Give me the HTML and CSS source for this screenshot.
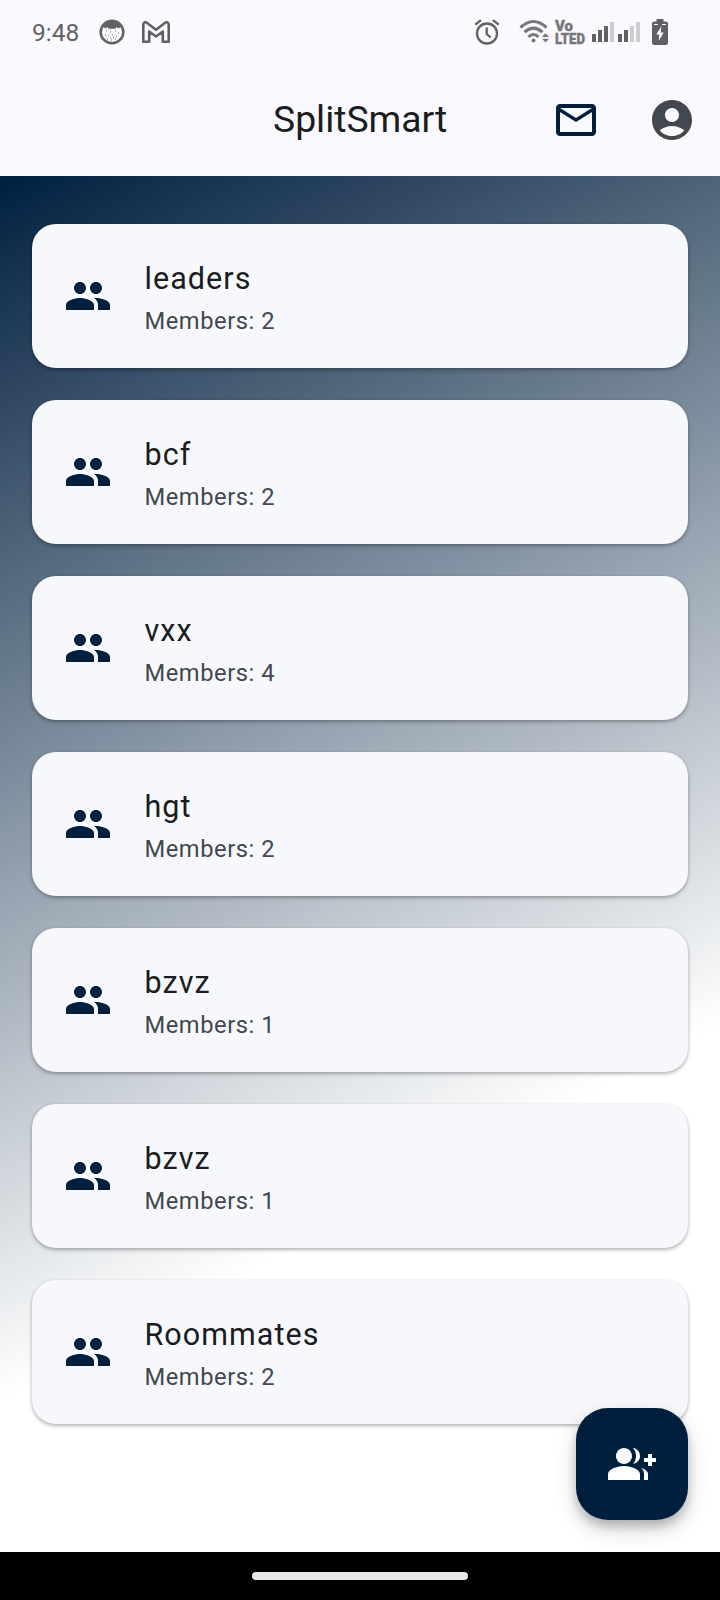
FILE: index.html
```html
<!DOCTYPE html>
<html lang="en">
<head>
<meta charset="utf-8">
<title>SplitSmart</title>
<link rel="stylesheet" href="styles.css">
</head>
<body>
<svg class="sprite" aria-hidden="true">
  <symbol id="people" viewBox="0 0 24 24"><path d="M16 11c1.66 0 2.99-1.34 2.99-3S17.66 5 16 5s-3 1.34-3 3 1.34 3 3 3zm-8 0c1.66 0 2.99-1.34 2.99-3S9.66 5 8 5 5 6.340 5 8s1.34 3 3 3zm0 2c-2.330 0-7 1.170-7 3.500V19h14v-2.500c0-2.330-4.670-3.500-7-3.500zm8 0c-.290 0-.620.020-.970.050 1.160.840 1.970 1.970 1.970 3.450V19h6v-2.500c0-2.330-4.670-3.500-7-3.500z"/></symbol>
</svg>
<div class="screen">
  <header class="top">
    <div class="status">
      <span class="clock">9:48</span>
      <svg class="st-cat" width="26" height="26" viewBox="0 0 26 26"><circle cx="13" cy="13" r="11.300" fill="none" stroke="#616165" stroke-width="2.500"/><path d="M4 8Q8 2 13 2t9 6L19 9.500 17.500 7.700 16.500 9.700H9.500L8.500 7.700 7 9.500z" fill="#616165"/><path d="M7 12h1M11 13h1M16 12h1M19 14h1M6 16h1M9 17h1M13 16h1M17 17h1M8 20h1M12 21h1M16 20h1M14 18.500h1M11 19h1" stroke="#616165" stroke-width="1"/></svg>
      <svg class="st-gmail" width="28" height="22" viewBox="0 0 28 22"><path d="M1.300 3.500C1.300 1.300 3.300.700 4.800 1.800L14 8.800l9.200-7c1.500-1.100 3.500-.500 3.500 1.700V20.700H20.800V10.500L14 15.500 7.200 10.500V20.700H1.300z" fill="none" stroke="#616165" stroke-width="2.600" stroke-linejoin="round"/></svg>
      <span class="spacer"></span>
      <svg class="st-alarm" width="26" height="26" viewBox="0 0 26 26" fill="none" stroke="#616165" stroke-width="2.300"><circle cx="13" cy="14.500" r="10"/><path d="M1.300 5.700 7 1.200M19 1.200l5.700 4.500M12.700 8.500v6.500l4 3.500"/></svg>
      <svg class="st-wifi" width="32" height="26" viewBox="0 0 32 26" fill="none" stroke="#77777b" stroke-width="3.100"><path d="M1.500 8.500Q14.500-3.500 27.500 8.500M5.500 13.200Q14.500 5 23.500 13.200M9.500 17.800Q14.500 13.200 19.500 17.800"/><circle cx="14.500" cy="21.500" r="2" fill="#77777b" stroke="none"/><path d="m23 18 3.500-3.700 3.500 3.700zM23 19.700l3.500 3.700 3.500-3.700z" fill="#77777b" stroke="none"/></svg>
      <svg class="st-volte" width="30" height="26" viewBox="0 0 30 26"><text x="0" y="11.500" textLength="18" lengthAdjust="spacingAndGlyphs">Vo</text><text x="0" y="25" textLength="30" lengthAdjust="spacingAndGlyphs">LTED</text></svg>
      <svg class="st-signal" width="48" height="20" viewBox="0 0 48 20"><path d="M0 12h4v8H0zM6 8h4v12H6zM12 4h4v16h-4zM26 12h4v8h-4zM32 8h4v12h-4z" fill="#616165"/><path d="M18 0h4v20h-4zM38 4h4v16h-4zM44 0h4v20h-4z" fill="#cdcdd1"/></svg>
      <svg class="st-battery" width="16" height="26" viewBox="0 0 16 26"><path d="M4.500 0h7v2.500H14q2 0 2 2V24q0 2-2 2H2q-2 0-2-2V4.500q0-2 2-2h2.500z" fill="#616165"/><path d="M2 5.500h4M10 5.500h4" stroke="#f9f9ff" stroke-width="1"/><path d="M9.500 7 4.300 15.500h3L6.700 22l5-8.500h-3z" fill="#f9f9ff"/></svg>
    </div>
    <div class="appbar">
      <h1>SplitSmart</h1>
      <svg class="mail" viewBox="0 0 24 24"><path d="M22 6c0-1.100-.9-2-2-2H4c-1.100 0-2 .9-2 2v12c0 1.100.9 2 2 2h16c1.100 0 2-.9 2-2V6zm-2 0-8 5-8-5h16zm0 12H4V8l8 5 8-5v10z"/></svg>
      <svg class="account" viewBox="0 0 24 24"><path d="M12 2C6.480 2 2 6.480 2 12s4.480 10 10 10 10-4.480 10-10S17.520 2 12 2zm0 4c1.930 0 3.500 1.570 3.500 3.500S13.930 13 12 13s-3.500-1.570-3.500-3.500S10.070 6 12 6zm0 14c-2.030 0-4.430-.820-6.140-2.880C7.550 15.800 9.680 15 12 15s4.450.800 6.140 2.120C16.430 19.180 14.030 20 12 20z"/></svg>
    </div>
  </header>
  <main class="groups">
    <article class="card"><svg><use href="#people"/></svg><div><h2>leaders</h2><p>Members: 2</p></div></article>
    <article class="card"><svg><use href="#people"/></svg><div><h2>bcf</h2><p>Members: 2</p></div></article>
    <article class="card"><svg><use href="#people"/></svg><div><h2>vxx</h2><p>Members: 4</p></div></article>
    <article class="card"><svg><use href="#people"/></svg><div><h2>hgt</h2><p>Members: 2</p></div></article>
    <article class="card"><svg><use href="#people"/></svg><div><h2>bzvz</h2><p>Members: 1</p></div></article>
    <article class="card"><svg><use href="#people"/></svg><div><h2>bzvz</h2><p>Members: 1</p></div></article>
    <article class="card"><svg><use href="#people"/></svg><div><h2>Roommates</h2><p>Members: 2</p></div></article>
    <button class="fab" aria-label="Add group"><svg viewBox="0 0 24 24"><path d="M22 9V7h-2v2h-2v2h2v2h2v-2h2V9zM8 12c2.210 0 4-1.790 4-4s-1.790-4-4-4-4 1.790-4 4 1.790 4 4 4zm0 1c-2.670 0-8 1.340-8 4v3h16v-3c0-2.660-5.330-4-8-4z"/><path d="M12.510 4.050C13.430 5.110 14 6.490 14 8s-.57 2.890-1.490 3.950C14.470 11.700 16 10.040 16 8s-1.530-3.700-3.490-3.950zM16.530 13.830C17.420 14.660 18 15.700 18 17v3h2v-3c0-1.450-1.590-2.510-3.470-3.170z"/></svg></button>
  </main>
  <footer class="navbar"><span></span></footer>
</div>
</body>
</html>
```
FILE: styles.css
```css
* { box-sizing: border-box; margin: 0; padding: 0; }
body { font-family: Roboto, "Liberation Sans", sans-serif; }
.sprite { position: absolute; width: 0; height: 0; }
.screen { width: 720px; height: 1600px; display: flex; flex-direction: column; overflow: hidden; }
.top { height: 176px; background: #f9f9ff; }
.status { height: 64px; padding: 0 52px 0 32px; display: flex; align-items: center; }
.clock { width: 67px; font-size: 24.500px; line-height: 64px; padding-top: 2px; color: #616165; }
.st-gmail { margin-left: 17px; }
.spacer { flex: 1; }
.st-wifi { margin-left: 19px; }
.st-volte { margin: 0 7px 0 4px; overflow: visible; font-size: 15.500px; font-weight: 900; fill: #77777b; stroke: #77777b; stroke-width: .4px; }
.st-battery { margin-left: 12px; }
.appbar { height: 112px; display: grid; grid-template-columns: 1fr 48px 48px; column-gap: 48px; align-items: center; padding: 0 24px 0 273px; }
.appbar h1 { font-size: 37.300px; line-height: 44px; padding-bottom: 2px; font-weight: 400; color: #191c20; }
.appbar svg { width: 48px; height: 48px; }
.mail { fill: #001f3f; }
.account { fill: #43474e; }
.groups { position: relative; height: 1376px; padding: 48px 32px; display: flex; flex-direction: column; gap: 32px; background: linear-gradient(152.380deg, #001f3f 0%, #fff 70%); }
.card { height: 144px; padding: 4px 32px 0; display: flex; gap: 32.500px; border-radius: 24px; background: #f7f8fc; box-shadow: 0 2px 4px rgba(0,0,0,.24), 0 1px 3px rgba(0,0,0,.12); }
.card svg { width: 48px; height: 48px; margin-top: 44px; fill: #001f3f; }
.card div { padding-top: 28px; }
.card h2 { font-size: 30.500px; line-height: 46px; font-weight: 400; letter-spacing: 1.050px; color: #191c20; }
.card p { font-size: 23.700px; line-height: 39px; letter-spacing: .550px; color: #43474e; }
.fab { position: absolute; right: 32px; bottom: 32px; width: 112px; height: 112px; border: 0; border-radius: 32px; background: #001f3f; display: grid; place-items: center; box-shadow: 0 6px 10px rgba(0,0,0,.2), 0 10px 22px rgba(0,0,0,.16); }
.fab svg { width: 48px; height: 48px; fill: #fff; }
.navbar { height: 48px; background: #000; display: flex; align-items: center; justify-content: center; }
.navbar span { width: 216px; height: 8px; border-radius: 4px; background: #eaeaea; }
```
